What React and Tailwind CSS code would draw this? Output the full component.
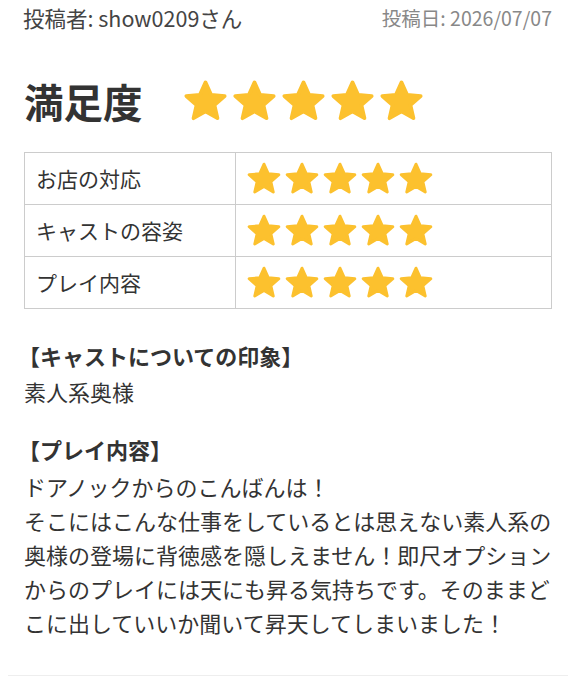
import React from 'react'

const STAR_PATH = 'M12 2.6l2.75 6.1 6.65.62-5.03 4.4 1.5 6.5L12 16.8l-5.87 3.42 1.5-6.5-5.03-4.4 6.65-.62z'

const Star = ({ className }) => (
  <svg viewBox='0 0 24 24' className={className} aria-hidden='true'>
    <path d={STAR_PATH} fill='#fcc12e' stroke='#fcc12e' strokeWidth='1.8' strokeLinejoin='round' />
  </svg>
)

const Stars = ({ size }) => (
  <div className='flex'>
    {[0, 1, 2, 3, 4].map((i) => (
      <Star key={i} className={size} />
    ))}
  </div>
)

const ratings = ['お店の対応', 'キャストの容姿', 'プレイ内容']

const App = () => {
  return (
    <div
      className='bg-white text-[#333] min-h-[679px]'
      style={{ fontFamily: '"Noto Sans CJK JP", "Noto Sans", sans-serif' }}
    >
      <div className='px-6 pb-[36px]'>
        {/* poster / date */}
        <div className='flex items-center justify-between h-9'>
          <span className='text-[21.5px] text-[#444] -ml-px'>投稿者: show0209さん</span>
          <span className='text-[19.5px] text-[#888]'>投稿日: 2026/07/07</span>
        </div>

        {/* overall score */}
        <div className='flex items-center h-[56px] mt-[37px]'>
          <h2 className='text-[39.5px] font-bold leading-none mr-[38px]'>満足度</h2>
          <Stars size='w-[49px] h-[49px]' />
        </div>

        {/* per-item scores */}
        <table className='w-full mt-[23px] border-collapse border border-[#ccc] text-[21px]'>
          <tbody>
            {ratings.map((label) => (
              <tr key={label} className='h-[52px]'>
                <td className='w-[211px] border border-[#ccc] pl-[11px]'>{label}</td>
                <td className='border border-[#ccc] pl-[9px]'>
                  <Stars size='w-[38px] h-[38px]' />
                </td>
              </tr>
            ))}
          </tbody>
        </table>

        {/* comments */}
        <div className='mt-[28px] text-[22px]'>
          <h3 className='font-bold leading-[36px] -ml-[6px]'>【キャストについての印象】</h3>
          <p className='leading-[37px]'>素人系奥様</p>

          <h3 className='font-bold leading-[36px] mt-[21px] -ml-[6px]'>【プレイ内容】</h3>
          <p className='leading-[34px] mt-[2px]'>
            ドアノックからのこんばんは！
            <br />
            そこにはこんな仕事をしているとは思えない素人系の奥様の登場に背徳感を隠しえません！即尺オプションからのプレイには天にも昇る気持ちです。そのままどこに出していいか聞いて昇天してしまいました！
          </p>
        </div>
      </div>
      <div className='mx-2 border-t border-[#eee]' />
    </div>
  )
}

export default App
